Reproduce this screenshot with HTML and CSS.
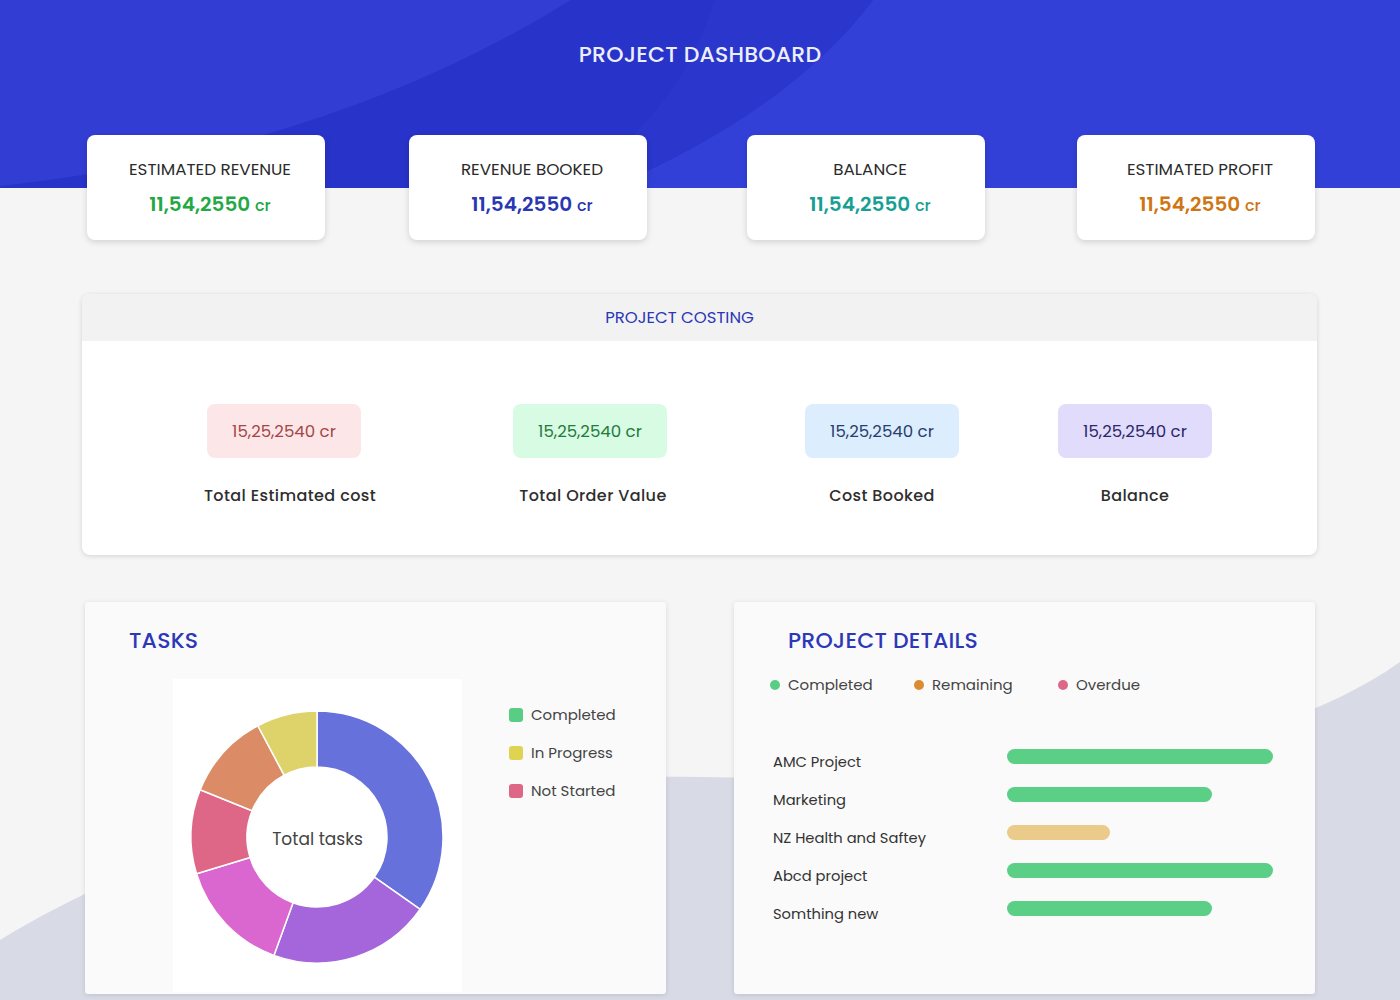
FILE: index.html
```html
<!DOCTYPE html>
<html lang="en">
<head>
<meta charset="utf-8">
<title>Project Dashboard</title>
<link rel="stylesheet" href="styles.css">
</head>
<body>
<svg class="page-bg" width="1400" height="1000" viewBox="0 0 1400 1000" aria-hidden="true">
  <path d="M0,940 C180,830 420,772 700,777 C960,782 1240,775 1400,662 L1400,1000 L0,1000 Z" fill="#d8dae6"/>
</svg>
<div class="page">
  <header class="hero">
    <svg class="hero-bg" width="1400" height="188" viewBox="0 0 1400 188" preserveAspectRatio="none" aria-hidden="true">
      <rect width="1400" height="188" fill="#3240d8"/>
      <path d="M0,0 L873,0 Q790,110 610,188 L0,188 Z" fill="#2833c9"/>
      <path d="M714,0 Q680,120 560,188 L610,188 Q790,110 873,0 Z" fill="#2a36cc"/>
      <path d="M0,0 L571,0 Q330,150 0,186 Z" fill="#323dd4"/>
    </svg>
    <h1 class="hero-title">PROJECT DASHBOARD</h1>
  </header>

  <section class="stats">
    <div class="stat">
      <div class="stat-label">ESTIMATED REVENUE</div>
      <div class="stat-value green">11,54,2550 <span class="unit">cr</span></div>
    </div>
    <div class="stat">
      <div class="stat-label">REVENUE BOOKED</div>
      <div class="stat-value navy">11,54,2550 <span class="unit">cr</span></div>
    </div>
    <div class="stat">
      <div class="stat-label">BALANCE</div>
      <div class="stat-value teal">11,54,2550 <span class="unit">cr</span></div>
    </div>
    <div class="stat">
      <div class="stat-label">ESTIMATED PROFIT</div>
      <div class="stat-value orange">11,54,2550 <span class="unit">cr</span></div>
    </div>
  </section>

  <section class="costing">
    <div class="costing-head">PROJECT COSTING</div>
    <div class="costing-body">
      <div class="cost-item">
        <div class="pill pill-red">15,25,2540 cr</div>
        <div class="cost-label">Total Estimated cost</div>
      </div>
      <div class="cost-item">
        <div class="pill pill-green">15,25,2540 cr</div>
        <div class="cost-label">Total Order Value</div>
      </div>
      <div class="cost-item">
        <div class="pill pill-blue">15,25,2540 cr</div>
        <div class="cost-label">Cost Booked</div>
      </div>
      <div class="cost-item">
        <div class="pill pill-purple">15,25,2540 cr</div>
        <div class="cost-label">Balance</div>
      </div>
    </div>
  </section>

  <section class="lower">
    <div class="panel tasks">
      <h2 class="panel-title">TASKS</h2>
      <div class="tasks-body">
        <div class="chart-box">
          <svg class="donut" width="289" height="313" viewBox="0 0 289 313">
            <g stroke="#ffffff" stroke-width="1.5" stroke-linejoin="round">
              <path d="M144,32 A126,126 0 0 1 247.22,230.27 L201.34,198.15 A70,70 0 0 0 144,88 Z" fill="#6771db"/>
              <path d="M247.22,230.27 A126,126 0 0 1 100.91,276.40 L120.06,223.78 A70,70 0 0 0 201.34,198.15 Z" fill="#a466da"/>
              <path d="M100.91,276.40 A126,126 0 0 1 23.51,194.84 L77.06,178.47 A70,70 0 0 0 120.06,223.78 Z" fill="#da66cf"/>
              <path d="M23.51,194.84 A126,126 0 0 1 27.17,110.80 L79.10,131.78 A70,70 0 0 0 77.06,178.47 Z" fill="#de6787"/>
              <path d="M27.17,110.80 A126,126 0 0 1 84.84,46.75 L111.13,96.20 A70,70 0 0 0 79.10,131.78 Z" fill="#db8b66"/>
              <path d="M84.84,46.75 A126,126 0 0 1 144,32 L144,88 A70,70 0 0 0 111.13,96.20 Z" fill="#ddd36a"/>
            </g>
          </svg>
          <div class="donut-label">Total tasks</div>
        </div>
        <ul class="legend">
          <li class="legend-item"><span class="swatch sw-green"></span>Completed</li>
          <li class="legend-item"><span class="swatch sw-yellow"></span>In Progress</li>
          <li class="legend-item"><span class="swatch sw-red"></span>Not Started</li>
        </ul>
      </div>
    </div>

    <div class="panel details">
      <h2 class="panel-title details-title">PROJECT DETAILS</h2>
      <div class="dot-legend">
        <span class="dot-item"><span class="dot dot-green"></span>Completed</span>
        <span class="dot-item"><span class="dot dot-orange"></span>Remaining</span>
        <span class="dot-item"><span class="dot dot-pink"></span>Overdue</span>
      </div>
      <div class="rows">
        <div class="row"><span class="row-label">AMC Project</span><span class="bar bar-green" style="width:266px"></span></div>
        <div class="row"><span class="row-label">Marketing</span><span class="bar bar-green" style="width:205px"></span></div>
        <div class="row"><span class="row-label">NZ Health and Saftey</span><span class="bar bar-tan" style="width:103px"></span></div>
        <div class="row"><span class="row-label">Abcd project</span><span class="bar bar-green" style="width:266px"></span></div>
        <div class="row"><span class="row-label">Somthing new</span><span class="bar bar-green" style="width:205px"></span></div>
      </div>
    </div>
  </section>
</div>
</body>
</html>
```

FILE: styles.css
```css
* { box-sizing: border-box; }

html, body {
  margin: 0;
  padding: 0;
  width: 1400px;
  height: 1000px;
  overflow: hidden;
}

body {
  background: #f5f5f5;
  font-family: "Poppins", "Open Sans", "Noto Sans", sans-serif;
  color: #333;
  position: relative;
}

.page-bg {
  position: absolute;
  left: 0;
  top: 0;
  z-index: 0;
}

.page {
  position: relative;
  z-index: 1;
}

/* hero */
.hero {
  position: relative;
  height: 188px;
  display: flex;
  justify-content: center;
}

.hero-bg {
  position: absolute;
  left: 0;
  top: 0;
  z-index: 0;
}

.hero-title {
  position: relative;
  z-index: 1;
  margin: 40px 0 0;
  font-size: 22px;
  line-height: 30px;
  font-weight: 500;
  color: #eceef9;
  letter-spacing: 0.2px;
}

/* stats */
.stats {
  position: relative;
  margin-top: -53px;
  margin-left: 87px;
  display: grid;
  grid-template-columns: 322px 338px 330px 238px;
}

.stat {
  width: 238px;
  height: 105px;
  background: #fff;
  border-radius: 8px;
  box-shadow: 0 2px 6px rgba(0, 0, 0, 0.15);
  display: flex;
  flex-direction: column;
  align-items: center;
  padding: 22px 0 0 8px;
}

.stat-label {
  font-size: 16.8px;
  line-height: 24px;
  font-weight: 400;
  color: #2b2b2b;
}

.stat-value {
  margin-top: 10px;
  font-size: 20px;
  line-height: 26px;
  font-weight: 600;
}

.stat-value .unit {
  font-size: 16px;
  font-weight: 500;
}

.green { color: #22a845; }
.navy { color: #2a37b2; }
.teal { color: #179f93; }
.orange { color: #cf7513; }

/* costing */
.costing {
  margin: 54px 0 0 82px;
  width: 1235px;
  background: #fff;
  border-radius: 8px;
  box-shadow: 0 1px 5px rgba(0, 0, 0, 0.14);
  overflow: hidden;
}

.costing-head {
  height: 47px;
  background: #f2f2f2;
  display: flex;
  align-items: center;
  justify-content: center;
  padding-right: 40px;
  font-size: 16.5px;
  font-weight: 400;
  color: #2c38b8;
  line-height: 20px;
}

.costing-body {
  display: grid;
  grid-template-columns: 306px 306px 278px 228px;
  padding: 63px 0 47px 49px;
}

.cost-item {
  display: flex;
  flex-direction: column;
  align-items: center;
}

.pill {
  width: 154px;
  height: 54px;
  border-radius: 8px;
  display: flex;
  align-items: center;
  justify-content: center;
  font-size: 16.6px;
  font-weight: 400;
}

.pill-red { background: #fde6e7; color: #a24848; }
.pill-green { background: #d8fbe3; color: #237a3c; }
.pill-blue { background: #dcedfd; color: #27406c; }
.pill-purple { background: #e1dcfc; color: #2b2868; }

.cost-label {
  margin-top: 26px;
  font-size: 16px;
  line-height: 24px;
  font-weight: 500;
  letter-spacing: 0.4px;
  color: #2e2e2e;
}

.cost-item:nth-child(1) .cost-label { margin-left: 12px; }
.cost-item:nth-child(2) .cost-label { margin-left: 6px; }

/* lower panels */
.lower {
  margin: 47px 0 0 85px;
  width: 1230px;
  display: flex;
  justify-content: space-between;
}

.panel {
  width: 581px;
  height: 392px;
  background: #fafafa;
  box-shadow: 0 1px 5px rgba(0, 0, 0, 0.12);
  border-radius: 3px;
}

.panel-title {
  margin: 0;
  font-size: 22px;
  line-height: 30px;
  font-weight: 500;
  color: #2c38b8;
  letter-spacing: 0.2px;
}

.tasks {
  padding: 24px 0 0 44px;
}

.tasks-body {
  display: flex;
  margin-top: 23px;
  padding-left: 44px;
}

.chart-box {
  position: relative;
  width: 289px;
  height: 313px;
  background: #ffffff;
}

.donut {
  display: block;
}

.donut-label {
  position: absolute;
  left: 0;
  right: 0;
  top: 148px;
  text-align: center;
  font-size: 17px;
  line-height: 24px;
  color: #444;
}

.legend {
  list-style: none;
  margin: 25px 0 0 47px;
  padding: 0;
  display: flex;
  flex-direction: column;
  gap: 16px;
}

.legend-item {
  display: flex;
  align-items: center;
  font-size: 15px;
  line-height: 22px;
  color: #444;
}

.swatch {
  width: 14px;
  height: 14px;
  border-radius: 3px;
  margin-right: 8px;
}

.sw-green { background: #5acd85; }
.sw-yellow { background: #dfd452; }
.sw-red { background: #de6787; }

/* details */
.details {
  padding: 24px 0 0 36px;
}

.details-title {
  margin-left: 18px;
}

.dot-legend {
  display: flex;
  margin-top: 18px;
}

.dot-item {
  display: flex;
  align-items: center;
  font-size: 15px;
  line-height: 22px;
  color: #444;
  width: 144px;
}

.dot {
  width: 10px;
  height: 10px;
  border-radius: 50%;
  margin-right: 8px;
}

.dot-green { background: #5acd85; }
.dot-orange { background: #dc8b30; }
.dot-pink { background: #de6787; }

.rows {
  margin-top: 47px;
  margin-left: 3px;
}

.row {
  display: flex;
  align-items: center;
  height: 38px;
}

.row-label {
  width: 234px;
  font-size: 14.7px;
  line-height: 22px;
  color: #333;
}

.bar {
  height: 15px;
  border-radius: 8px;
  margin-bottom: 12px;
}

.bar-green { background: #5ccf87; }
.bar-tan { background: #eacb8a; }
```
